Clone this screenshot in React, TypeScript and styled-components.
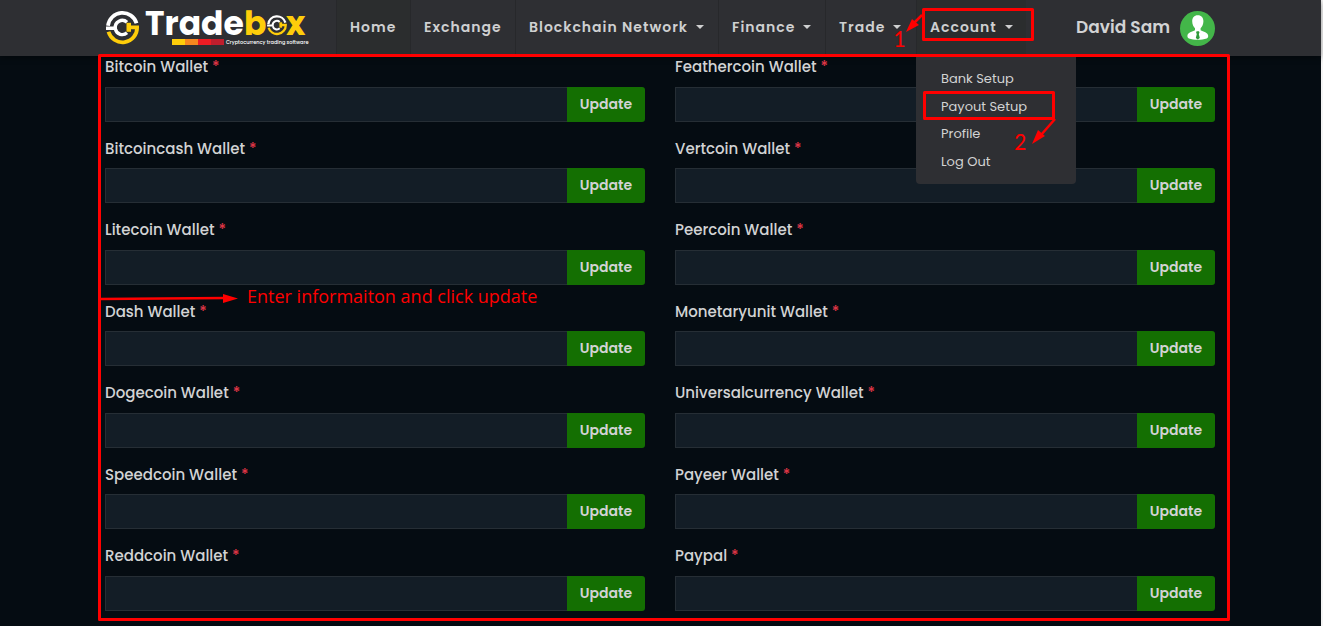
import React from "react";
import styled, { createGlobalStyle } from "styled-components";

const GlobalStyle = createGlobalStyle`
  *, *::before, *::after { box-sizing: border-box; }
  body {
    margin: 0;
    background: #f4f4f4;
    color: #d2d3d4;
    font: 500 15px/1.5 Poppins, Inter, "Liberation Sans", sans-serif;
  }
`;

const Page = styled.div`
  position: relative;
  min-height: 100vh;
  margin-right: 2px;
  background: #050c12;
`;

const Header = styled.header`
  padding-right: 1px;
  background: #2e2f33;
  box-shadow: 0 2px 6px rgba(0, 0, 0, 0.4);
`;

const Main = styled.main`
  padding-right: 1px;
`;

const Container = styled.div`
  width: 100%;
  max-width: 1140px;
  margin: 0 auto;
  padding: 0 15px;
`;

const Bar = styled(Container)`
  display: flex;
  align-items: center;
  height: 56px;
`;

const LogoLink = styled.a`
  display: block;
  flex: none;
  width: 231px;
  height: 56px;
`;

const NavList = styled.ul`
  display: grid;
  grid-template-columns: 74px 105px 203px 107px 91px 110px;
  height: 56px;
  margin: 0;
  padding: 0;
  list-style: none;
`;

const NavItem = styled.li`
  position: relative;
  border-left: 1px solid #27282b;
`;

const NavLink = styled.a<{ $active?: boolean }>`
  display: flex;
  align-items: center;
  gap: 8px;
  height: 100%;
  padding: 0 12px 2px 13px;
  background: ${(p) => (p.$active ? "#2b2d2e" : "transparent")};
  color: #cfd0d1;
  font-size: 14px;
  font-weight: 600;
  letter-spacing: 1px;
  white-space: nowrap;
  text-decoration: none;
`;

const Caret = styled.span`
  border-top: 4px solid currentColor;
  border-left: 4px solid transparent;
  border-right: 4px solid transparent;
`;

const Menu = styled.ul`
  position: absolute;
  z-index: 2;
  top: 56px;
  left: -1px;
  width: 160px;
  margin: 0;
  padding: 9px 0;
  border-radius: 0 0 4px 4px;
  background: #2e2f33;
  list-style: none;
`;

const MenuLink = styled.a`
  display: block;
  padding: 4px 25px;
  color: #d2d3d4;
  font-size: 13px;
  font-weight: 400;
  line-height: 1.5;
  text-decoration: none;
`;

const User = styled.div`
  display: flex;
  align-items: center;
  gap: 10px;
  margin-left: auto;
  font-size: 17px;
  font-weight: 600;
  white-space: nowrap;
`;

const Form = styled.form`
  display: grid;
  grid-template-columns: 1fr 1fr;
  column-gap: 30px;
  row-gap: 16px;
`;

const Field = styled.div`
  min-width: 0;
`;

const Label = styled.label`
  display: block;
  margin-bottom: 8px;
`;

const Required = styled.span`
  color: #dc3545;
`;

const InputGroup = styled.div`
  display: flex;
  height: 35px;
`;

const TextInput = styled.input`
  flex: 1;
  min-width: 0;
  padding: 6px 12px;
  border: 1px solid #262e35;
  border-right: 0;
  border-radius: 0;
  background: #131d26;
  color: inherit;
  font: inherit;
`;

const UpdateButton = styled.button`
  width: 78px;
  padding: 0;
  border: 0;
  border-radius: 0 3px 3px 0;
  background: #146f02;
  color: #d2d3d4;
  font: inherit;
  font-size: 14px;
  font-weight: 600;
`;

const Notes = styled.div`
  position: absolute;
  z-index: 3;
  top: 0;
  left: 0;
  right: 1px;
  width: 1140px;
  height: 626px;
  margin: 0 auto;
  pointer-events: none;
`;

const NoteDrawing = styled.svg`
  display: block;
  width: 100%;
  height: 100%;
  overflow: visible;
`;

const fields = [
  "Bitcoin Wallet", "Feathercoin Wallet",
  "Bitcoincash Wallet", "Vertcoin Wallet",
  "Litecoin Wallet", "Peercoin Wallet",
  "Dash Wallet", "Monetaryunit Wallet",
  "Dogecoin Wallet", "Universalcurrency Wallet",
  "Speedcoin Wallet", "Payeer Wallet",
  "Reddcoin Wallet", "Paypal",
];

const navItems = [
  { name: "Home", active: true },
  { name: "Exchange" },
  { name: "Blockchain Network", caret: true },
  { name: "Finance", caret: true },
  { name: "Trade", caret: true },
  { name: "Account", caret: true, active: true, menu: ["Bank Setup", "Payout Setup", "Profile", "Log Out"] },
];

function Coin() {
  return (
    <g fill="none" strokeWidth="3.8">
      <path d="M-16.500 1H-7.200A7 7 0 0 1 4.500-5" stroke="#fff" strokeWidth="3.4" />
      <path d="M-14.500-1.500A14.600 14.600 0 0 1 14-4" stroke="#fff" />
      <path d="M-7 2A7 7 0 0 0 4.500 5.500" stroke="#fff" strokeWidth="3.4" />
      <path d="M-14 4.500A14.600 14.600 0 0 0 14.600 0H6" stroke="#fecd0a" />
      <path d="M4-4.500h4.500v9H4z" fill="#fecd0a" />
    </g>
  );
}

function Logo() {
  return (
    <svg width="204" height="56" viewBox="105 0 204 56" role="img" aria-label="Tradebox">
      <g transform="translate(122.500 27.300)"><Coin /></g>
      <g fontFamily="Poppins, Inter, sans-serif" fontWeight="700" fontSize="33">
        <text x="145" y="35" fill="#fff">Trade</text>
        <text x="244" y="35" fill="#fecd0a">b</text>
        <text x="286" y="35" fill="#fecd0a">x</text>
      </g>
      <g transform="translate(277 25) scale(0.6)"><Coin /></g>
      <path d="M172 39h13v6h-13z" fill="#fecd0a" />
      <path d="M185 39h13v6h-13z" fill="#f6871f" />
      <path d="M198 39h13v6h-13z" fill="#ed1c24" />
      <path d="M211 39h13v6h-13z" fill="#be1e2d" />
      <text x="226" y="44" fill="#fff" fontFamily="Poppins, Inter, sans-serif" fontWeight="500" fontSize="5">
        Cryptocurrency trading software
      </text>
    </svg>
  );
}

function Avatar() {
  return (
    <svg width="35" height="35" viewBox="0 0 35 35" role="img" aria-label="David Sam">
      <circle cx="17.5" cy="17.5" r="17.5" fill="#43b649" />
      <path d="M17.800 4.300c3.700 0 5.600 2.600 5.600 6 0 3.200-1.400 5.600-2.800 7v2c2.500 1.300 7.600 2.300 7.600 5.700 0 1.300-.5 2-1.500 2.400-5 1.800-12.800 1.800-17.800 0-1-.4-1.500-1.100-1.500-2.400 0-3.400 5.100-4.400 7.600-5.700v-2c-1.400-1.400-2.800-3.800-2.800-7 0-3.400 1.900-6 5.600-6z" fill="#fff" />
      <path d="M16.600 20.200h2.400l.5 1.500-.7 1.200 1 4-2 1.700-2-1.700 1-4-.7-1.200z" fill="#2f9a3a" />
    </svg>
  );
}

function Annotations() {
  return (
    <Notes>
      <NoteDrawing viewBox="90 0 1140 626">
        <g fill="none" stroke="#f00" strokeWidth="3" strokeLinejoin="round">
          <rect x="99.500" y="55.500" width="1129" height="564" />
          <rect x="923.500" y="9.500" width="109" height="30" />
          <rect x="924.500" y="92.500" width="129" height="26" />
          <path d="M922 15l-8 8M1055 119l-14 16M100 299l126-1" strokeWidth="2.500" />
        </g>
        <path d="M906 32l6-13 7 6zM1032 144l6-14 7 6zM238 298.500l-15-4.500v9z" fill="#f00" />
        <g fill="#f00" fontFamily="Carlito, Lato, sans-serif" fontWeight="400">
          <text x="893" y="47" fontSize="24">1</text>
          <text x="1014" y="150" fontSize="24">2</text>
          <text x="247" y="303" fontSize="18" fontFamily="'Open Sans', 'Noto Sans', sans-serif">
            Enter informaiton and click update
          </text>
        </g>
      </NoteDrawing>
    </Notes>
  );
}

export default function App() {
  return (
    <>
      <GlobalStyle />
      <Page>
        <Header>
          <Bar>
            <LogoLink href="#"><Logo /></LogoLink>
            <nav>
              <NavList>
                {navItems.map((item) => (
                  <NavItem key={item.name}>
                    <NavLink href="#" $active={item.active}>
                      {item.name}
                      {item.caret && <Caret />}
                    </NavLink>
                    {item.menu && (
                      <Menu>
                        {item.menu.map((entry) => (
                          <li key={entry}><MenuLink href="#">{entry}</MenuLink></li>
                        ))}
                      </Menu>
                    )}
                  </NavItem>
                ))}
              </NavList>
            </nav>
            <User>David Sam <Avatar /></User>
          </Bar>
        </Header>
        <Main>
          <Container>
            <Form onSubmit={(e) => e.preventDefault()}>
              {fields.map((name) => {
                const id = name.toLowerCase().replace(/ /g, "-");
                return (
                  <Field key={id}>
                    <Label htmlFor={id}>{name} <Required>*</Required></Label>
                    <InputGroup>
                      <TextInput id={id} type="text" required />
                      <UpdateButton type="submit">Update</UpdateButton>
                    </InputGroup>
                  </Field>
                );
              })}
            </Form>
          </Container>
        </Main>
        <Annotations />
      </Page>
    </>
  );
}
